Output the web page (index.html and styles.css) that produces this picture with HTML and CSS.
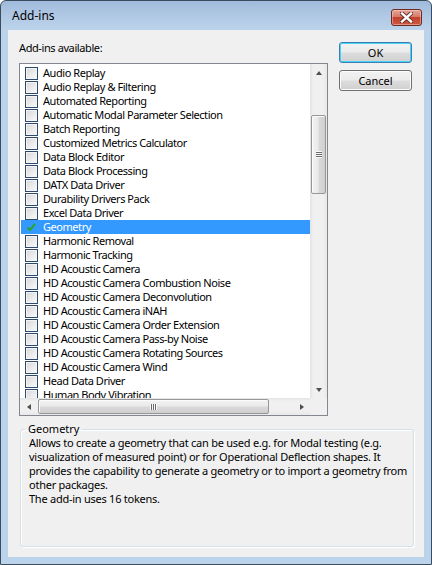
FILE: index.html
```html
<!DOCTYPE html>
<html>
<head>
<meta charset="utf-8">
<title>Add-ins</title>
<link rel="stylesheet" href="styles.css">
</head>
<body>
<div class="window">
  <div class="titlebar">
    <span class="title">Add-ins</span>
    <button class="close" aria-label="Close">
      <svg width="13" height="11" viewBox="0 0 13 11">
        <path d="M2 1.5 L11 9.5 M11 1.5 L2 9.5" stroke="#5a2a24" stroke-width="4.2" stroke-linecap="square"/>
        <path d="M2 1.5 L11 9.5 M11 1.5 L2 9.5" stroke="#ffffff" stroke-width="2.4" stroke-linecap="square"/>
      </svg>
    </button>
  </div>
  <div class="client">
    <div class="top">
      <div class="left">
        <div class="label">Add-ins available:</div>
        <div class="listbox">
          <div class="viewport">
            <div class="row"><span class="cb"></span><span class="txt">Audio Replay</span></div>
            <div class="row"><span class="cb"></span><span class="txt">Audio Replay &amp; Filtering</span></div>
            <div class="row"><span class="cb"></span><span class="txt">Automated Reporting</span></div>
            <div class="row"><span class="cb"></span><span class="txt">Automatic Modal Parameter Selection</span></div>
            <div class="row"><span class="cb"></span><span class="txt">Batch Reporting</span></div>
            <div class="row"><span class="cb"></span><span class="txt">Customized Metrics Calculator</span></div>
            <div class="row"><span class="cb"></span><span class="txt">Data Block Editor</span></div>
            <div class="row"><span class="cb"></span><span class="txt">Data Block Processing</span></div>
            <div class="row"><span class="cb"></span><span class="txt">DATX Data Driver</span></div>
            <div class="row"><span class="cb"></span><span class="txt">Durability Drivers Pack</span></div>
            <div class="row"><span class="cb"></span><span class="txt">Excel Data Driver</span></div>
            <div class="row selected"><span class="cb checked"><svg width="11" height="11" viewBox="0 0 11 11"><path d="M1.5 5.5 L4 8 L9 2" fill="none" stroke="#2aa52a" stroke-width="2"/></svg></span><span class="txt">Geometry</span></div>
            <div class="row"><span class="cb"></span><span class="txt">Harmonic Removal</span></div>
            <div class="row"><span class="cb"></span><span class="txt">Harmonic Tracking</span></div>
            <div class="row"><span class="cb"></span><span class="txt">HD Acoustic Camera</span></div>
            <div class="row"><span class="cb"></span><span class="txt">HD Acoustic Camera Combustion Noise</span></div>
            <div class="row"><span class="cb"></span><span class="txt">HD Acoustic Camera Deconvolution</span></div>
            <div class="row"><span class="cb"></span><span class="txt">HD Acoustic Camera iNAH</span></div>
            <div class="row"><span class="cb"></span><span class="txt">HD Acoustic Camera Order Extension</span></div>
            <div class="row"><span class="cb"></span><span class="txt">HD Acoustic Camera Pass-by Noise</span></div>
            <div class="row"><span class="cb"></span><span class="txt">HD Acoustic Camera Rotating Sources</span></div>
            <div class="row"><span class="cb"></span><span class="txt">HD Acoustic Camera Wind</span></div>
            <div class="row"><span class="cb"></span><span class="txt">Head Data Driver</span></div>
            <div class="row"><span class="cb"></span><span class="txt">Human Body Vibration</span></div>
          </div>
          <div class="vscroll">
            <div class="arrow-btn"><span class="tri up"></span></div>
            <div class="vspace"></div>
            <div class="vthumb"><span class="grip-h"></span></div>
            <div class="vfill"></div>
            <div class="arrow-btn"><span class="tri down"></span></div>
          </div>
          <div class="hscroll">
            <div class="arrow-btn"><span class="tri left"></span></div>
            <div class="hthumb"><span class="grip-v"></span></div>
            <div class="hfill"></div>
            <div class="arrow-btn"><span class="tri right"></span></div>
          </div>
          <div class="corner"></div>
        </div>
      </div>
      <div class="buttons">
        <button class="btn default">OK</button>
        <button class="btn">Cancel</button>
      </div>
    </div>
    <fieldset class="group">
      <legend>Geometry</legend>
      <p class="desc">Allows to create a geometry that can be used e.g. for Modal testing (e.g.<br>visualization of measured point) or for Operational Deflection shapes. It<br>provides the capability to generate a geometry or to import a geometry from<br>other packages.<br>The add-in uses 16 tokens.</p>
    </fieldset>
  </div>
</div>
</body>
</html>
```

FILE: styles.css
```css
html, body {
  margin: 0;
  padding: 0;
  background: #ffffff;
}

body {
  font-family: "Noto Sans", "Open Sans", sans-serif;
  font-size: 11px;
  color: #000;
}

.window {
  box-sizing: border-box;
  width: 432px;
  height: 565px;
  border: 1px solid #3d4c5c;
  border-radius: 6px 6px 0 0;
  background: linear-gradient(#9fbbdb 0, #b4cbe6 18px, #bcd3ec 30px, #bcd3ec 100%);
  padding: 0 7px 7px 7px;
  display: flex;
  flex-direction: column;
}

.titlebar {
  height: 29px;
  display: flex;
  align-items: flex-start;
  flex: none;
}

.title {
  font-size: 12px;
  line-height: 16px;
  margin-top: 7px;
  margin-left: 4px;
  color: #000;
}

.close {
  margin-left: auto;
  margin-top: 8px;
  margin-right: 2px;
  width: 31px;
  height: 17px;
  padding: 0;
  border: 1px solid #6b2a22;
  border-radius: 3px;
  background: linear-gradient(#e6a698 0, #d67b6a 45%, #c2422d 50%, #cc5a40 100%);
  box-shadow: inset 0 0 0 1px rgba(255, 220, 210, 0.45);
  display: flex;
  align-items: center;
  justify-content: center;
}

.client {
  flex: 1;
  background: #f0f0f0;
  padding: 11px 10px 10px 11px;
  display: flex;
  flex-direction: column;
  min-height: 0;
}

.top {
  display: flex;
  gap: 11px;
  flex: none;
}

.left {
  width: 309px;
  display: flex;
  flex-direction: column;
}

.label {
  line-height: 14px;
  height: 14px;
  margin-bottom: 8px;
  white-space: nowrap;
  letter-spacing: -0.4px;
}

.listbox {
  box-sizing: border-box;
  width: 309px;
  height: 353px;
  border: 1px solid #828790;
  background: #fff;
  display: grid;
  grid-template-columns: 290px 17px;
  grid-template-rows: 334px 17px;
}

.viewport {
  overflow: hidden;
  padding-top: 2px;
}

.row {
  height: 14px;
  margin-left: 1px;
  padding-left: 4px;
  display: flex;
  align-items: center;
  white-space: nowrap;
  line-height: 14px;
}

.row.selected {
  background: #3399ff;
  color: #fff;
}

.cb {
  flex: none;
  box-sizing: border-box;
  width: 13px;
  height: 13px;
  margin-right: 5px;
  border: 1px solid #2c4a6b;
  background: linear-gradient(135deg, #d6d6d6 0, #ebebeb 55%, #fafafa 100%);
  box-shadow: inset 0 0 0 1px #f4f4f4;
  display: flex;
  align-items: center;
  justify-content: center;
}

.row.selected .cb {
  border-color: #3399ff;
  background: transparent;
  box-shadow: none;
}

.txt {
  letter-spacing: -0.45px;
}

/* scrollbars */
.vscroll {
  background: linear-gradient(to right, #e3e3e3 0, #f0f0f0 3px, #f0f0f0 13px, #e8e8e8 100%);
  display: flex;
  flex-direction: column;
}

.hscroll {
  background: linear-gradient(#e3e3e3 0, #f0f0f0 3px, #f0f0f0 13px, #e8e8e8 100%);
  display: flex;
}

.corner {
  background: #f0f0f0;
}

.arrow-btn {
  flex: none;
  width: 17px;
  height: 17px;
  display: flex;
  align-items: center;
  justify-content: center;
}

.tri {
  width: 0;
  height: 0;
  border-style: solid;
}

.tri.up {
  border-width: 0 3.5px 4px 3.5px;
  border-color: transparent transparent #505050 transparent;
}

.tri.down {
  border-width: 4px 3.5px 0 3.5px;
  border-color: #505050 transparent transparent transparent;
}

.tri.left {
  border-width: 3.5px 4px 3.5px 0;
  border-color: transparent #505050 transparent transparent;
}

.tri.right {
  border-width: 3.5px 0 3.5px 4px;
  border-color: transparent transparent transparent #505050;
}

.vspace {
  height: 34px;
  flex: none;
}

.vfill, .hfill {
  flex: 1;
}

.vthumb {
  box-sizing: border-box;
  flex: none;
  height: 79px;
  margin: 0 1px;
  border: 1px solid #979797;
  border-radius: 2px;
  background: linear-gradient(to right, #f4f4f4 0, #e9e9e9 45%, #d9d9d9 55%, #cfcfcf 100%);
  box-shadow: inset 1px 1px 0 #fbfbfb;
  display: flex;
  align-items: center;
  justify-content: center;
}

.grip-h {
  width: 6px;
  height: 7px;
  background: repeating-linear-gradient(#fafafa 0 1px, #6a6a6a 1px 2px);
}

.hthumb {
  box-sizing: border-box;
  flex: none;
  width: 231px;
  margin: 1px 0 1px 1px;
  border: 1px solid #979797;
  border-radius: 2px;
  background: linear-gradient(#f4f4f4 0, #e9e9e9 45%, #d9d9d9 55%, #cfcfcf 100%);
  box-shadow: inset 1px 1px 0 #fbfbfb;
  display: flex;
  align-items: center;
  justify-content: center;
}

.grip-v {
  width: 7px;
  height: 6px;
  background: repeating-linear-gradient(to right, #fafafa 0 1px, #6a6a6a 1px 2px);
}

/* buttons */
.buttons {
  width: 73px;
  display: flex;
  flex-direction: column;
  gap: 7px;
  padding-top: 1px;
}

.btn {
  box-sizing: border-box;
  width: 73px;
  height: 21px;
  padding: 0;
  border: 1px solid #707070;
  border-radius: 3px;
  background: linear-gradient(#f2f2f2 0, #ebebeb 48%, #dddddd 52%, #cfcfcf 100%);
  box-shadow: inset 0 0 0 1px #fbfbfb;
  font-family: "Noto Sans", "Open Sans", sans-serif;
  font-size: 11px;
  line-height: 14px;
  color: #000;
}

.btn.default {
  border-color: #3c7fb1;
  box-shadow: inset 0 0 0 1px #48d2f7;
}

/* group box */
.group {
  flex: 1;
  min-height: 0;
  margin: 6px 0 0 1px;
  padding: 0 8px;
  border: 1px solid #d5dfe5;
  border-radius: 3px;
  box-shadow: inset 1px 1px 0 #ffffff, 1px 1px 0 #ffffff;
  min-width: 0;
}

.group legend {
  padding: 0 3px;
  margin-left: -4px;
  line-height: 14px;
  font-size: 11px;
}

.desc {
  margin: 0;
  line-height: 14px;
  white-space: nowrap;
  letter-spacing: -0.25px;
}
```
